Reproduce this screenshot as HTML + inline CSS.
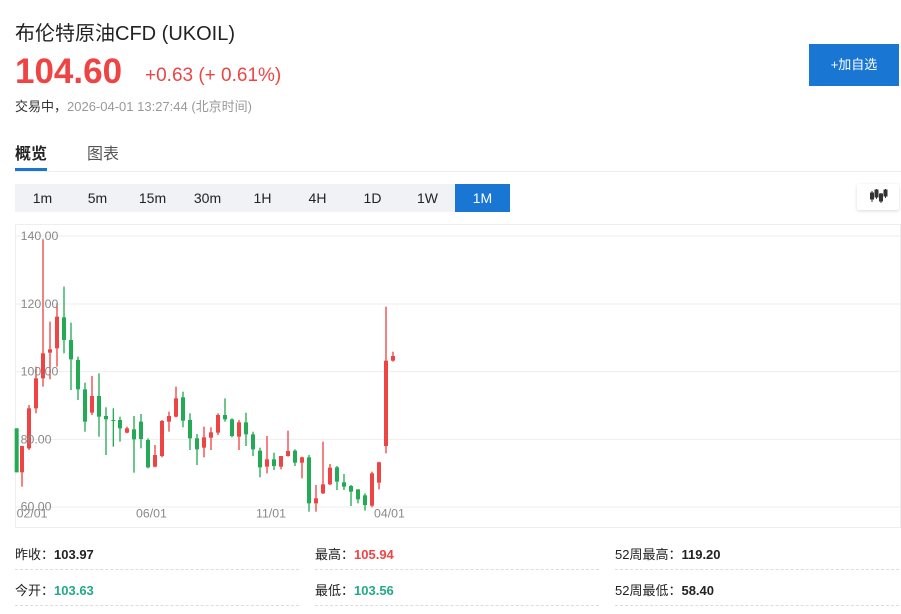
<!DOCTYPE html>
<html><head><meta charset="utf-8"><style>
body{margin:0;width:901px;height:614px;background:#fff;font-family:"Liberation Sans","Noto Sans CJK SC",sans-serif;position:relative;overflow:hidden;color:#222}
.a{position:absolute;white-space:nowrap}
.tb{position:absolute;top:184px;height:28px;width:55px;line-height:28px;text-align:center;font-size:14px;color:#222}
.st{position:absolute;font-size:13px;color:#222}
.st b{font-weight:bold}
.dl{position:absolute;height:0;border-top:1px dashed #ddd;width:284px}
</style></head><body>
<div class="a" style="left:15px;top:17px;font-size:20px;color:#222">布伦特原油CFD&nbsp;(UKOIL)</div>
<div class="a" style="left:15px;top:52px;font-size:35px;font-weight:bold;color:#ef4444">104.60</div>
<div class="a" style="left:145px;top:65px;font-size:19px;color:#ef4444">+0.63 (+ 0.61%)</div>
<div class="a" style="left:15px;top:96px;font-size:13px;color:#333">交易中，<span style="color:#999">2026-04-01 13:27:44 (北京时间)</span></div>
<div class="a" style="left:809px;top:44px;width:90px;height:42px;background:#1976d2;color:#fff;font-size:13px;line-height:42px;text-align:center">+加自选</div>
<div class="a" style="left:15px;top:140px;font-size:16px;font-weight:bold;color:#222">概览</div>
<div class="a" style="left:87px;top:140px;font-size:16px;color:#555">图表</div>
<div class="a" style="left:15px;top:168px;width:32px;height:3px;background:#1976d2"></div>
<div class="a" style="left:15px;top:171px;width:886px;height:1px;background:#eee"></div>
<div class="a" style="left:15px;top:184px;width:495px;height:28px;background:#f0f2f5"></div>
<div class="tb" style="left:15px">1m</div><div class="tb" style="left:70px">5m</div><div class="tb" style="left:125px">15m</div><div class="tb" style="left:180px">30m</div><div class="tb" style="left:235px">1H</div><div class="tb" style="left:290px">4H</div><div class="tb" style="left:345px">1D</div><div class="tb" style="left:400px">1W</div>
<div class="tb" style="left:455px;background:#1976d2;color:#fff">1M</div>
<div class="a" style="left:857px;top:184px;width:42px;height:26px;background:#fff;box-shadow:0 1px 3px rgba(0,0,0,.15);border-radius:2px">
<svg width="42" height="26" viewBox="0 0 42 26"><g stroke="#333" fill="#333"><line x1="15" y1="7" x2="15" y2="18"/><rect x="13.5" y="9" width="3" height="6"/><line x1="19.5" y1="5" x2="19.5" y2="15"/><rect x="18" y="6" width="3" height="7"/><line x1="24" y1="9" x2="24" y2="19"/><rect x="22.5" y="10" width="3" height="7"/><line x1="28.5" y1="5" x2="28.5" y2="14"/><rect x="27" y="6" width="3" height="6"/></g></svg></div>
<div class="a" style="left:15px;top:224px;width:884px;height:302px;border:1px solid #eee"></div>
<svg class="a" style="left:0;top:220px" width="901" height="310" viewBox="0 0 2703 930">
<g stroke="#eee" stroke-width="3"><line x1="48" y1="48" x2="2700" y2="48"/><line x1="48" y1="252" x2="2700" y2="252"/><line x1="48" y1="455" x2="2700" y2="455"/><line x1="48" y1="658" x2="2700" y2="658"/><line x1="48" y1="861" x2="2700" y2="861"/></g>
<g id="c"></g>
<g font-size="37" fill="#888" font-family="Liberation Sans,sans-serif"><text x="62" y="60">140.00</text><text x="62" y="264">120.00</text><text x="62" y="467">100.00</text><text x="62" y="670">80.00</text><text x="62" y="872">60.00</text><text x="50" y="892">02/01</text><text x="408" y="892">06/01</text><text x="768" y="892">11/01</text><text x="1122" y="892">04/01</text></g>
</svg>
<script>
var d=[[50,'g',625,757,625,757],[66,'r',678,757,678,800],[87,'r',565,685,555,690],[108,'r',475,565,440,580],[129,'r',400,475,60,500],[150,'r',388,398,305,478],[171,'r',290,385,250,440],[192,'g',292,360,200,400],[213,'g',360,418,308,510],[234,'g',420,508,410,540],[255,'g',508,605,488,635],[276,'r',528,578,468,585],[297,'g',528,590,460,650],[318,'g',588,598,562,705],[340,'g',600,603,565,680],[360,'g',600,625,590,665],[381,'r',625,638,620,640],[402,'g',628,658,588,758],[423,'g',605,657,582,685],[444,'g',660,742,655,745],[465,'r',705,740,675,742],[486,'r',603,708,600,712],[507,'r',588,605,575,635],[528,'r',535,590,500,592],[549,'g',532,602,515,622],[570,'g',600,655,580,690],[591,'g',655,688,642,735],[612,'r',652,683,620,712],[633,'r',637,653,622,690],[654,'r',585,638,580,645],[675,'g',585,598,535,605],[696,'g',598,648,595,652],[717,'r',607,650,600,690],[738,'g',607,643,578,678],[759,'g',643,688,635,708],[780,'g',692,742,683,772],[801,'r',718,740,648,760],[822,'g',718,738,698,750],[843,'r',708,740,708,748],[864,'r',693,708,632,710],[885,'g',692,728,688,738],[906,'r',712,728,710,775],[927,'g',712,850,705,875],[948,'r',835,850,795,875],[969,'r',793,820,665,822],[990,'r',743,793,732,795],[1011,'g',742,785,738,810],[1032,'g',787,800,762,810],[1053,'g',798,815,795,858],[1074,'g',808,838,808,850],[1095,'g',826,855,820,872],[1116,'r',760,857,755,862],[1137,'r',727,788,725,808],[1158,'r',422,678,260,700],[1179,'r',408,422,395,425]];
var s='';d.forEach(function(c){var col=c[1]=='r'?'#ef4444':'#22aa55';s+='<line x1="'+c[0]+'" x2="'+c[0]+'" y1="'+c[4]+'" y2="'+c[5]+'" stroke="'+col+'" stroke-width="4"/><rect x="'+(c[0]-6)+'" y="'+c[2]+'" width="12" height="'+Math.max(3,c[3]-c[2])+'" fill="'+col+'"/>';});
document.getElementById('c').innerHTML=s;
</script>
<div class="st" style="left:15px;top:544px">昨收：<b>103.97</b></div>
<div class="st" style="left:315px;top:544px">最高：<b style="color:#ef4444">105.94</b></div>
<div class="st" style="left:615px;top:544px">52周最高：<b>119.20</b></div>
<div class="st" style="left:15px;top:580px">今开：<b style="color:#22aa88">103.63</b></div>
<div class="st" style="left:315px;top:580px">最低：<b style="color:#22aa88">103.56</b></div>
<div class="st" style="left:615px;top:580px">52周最低：<b>58.40</b></div>
<div class="dl" style="left:15px;top:569px"></div><div class="dl" style="left:315px;top:569px"></div><div class="dl" style="left:615px;top:569px"></div>
<div class="dl" style="left:15px;top:605px"></div><div class="dl" style="left:315px;top:605px"></div><div class="dl" style="left:615px;top:605px"></div>
</body></html>
